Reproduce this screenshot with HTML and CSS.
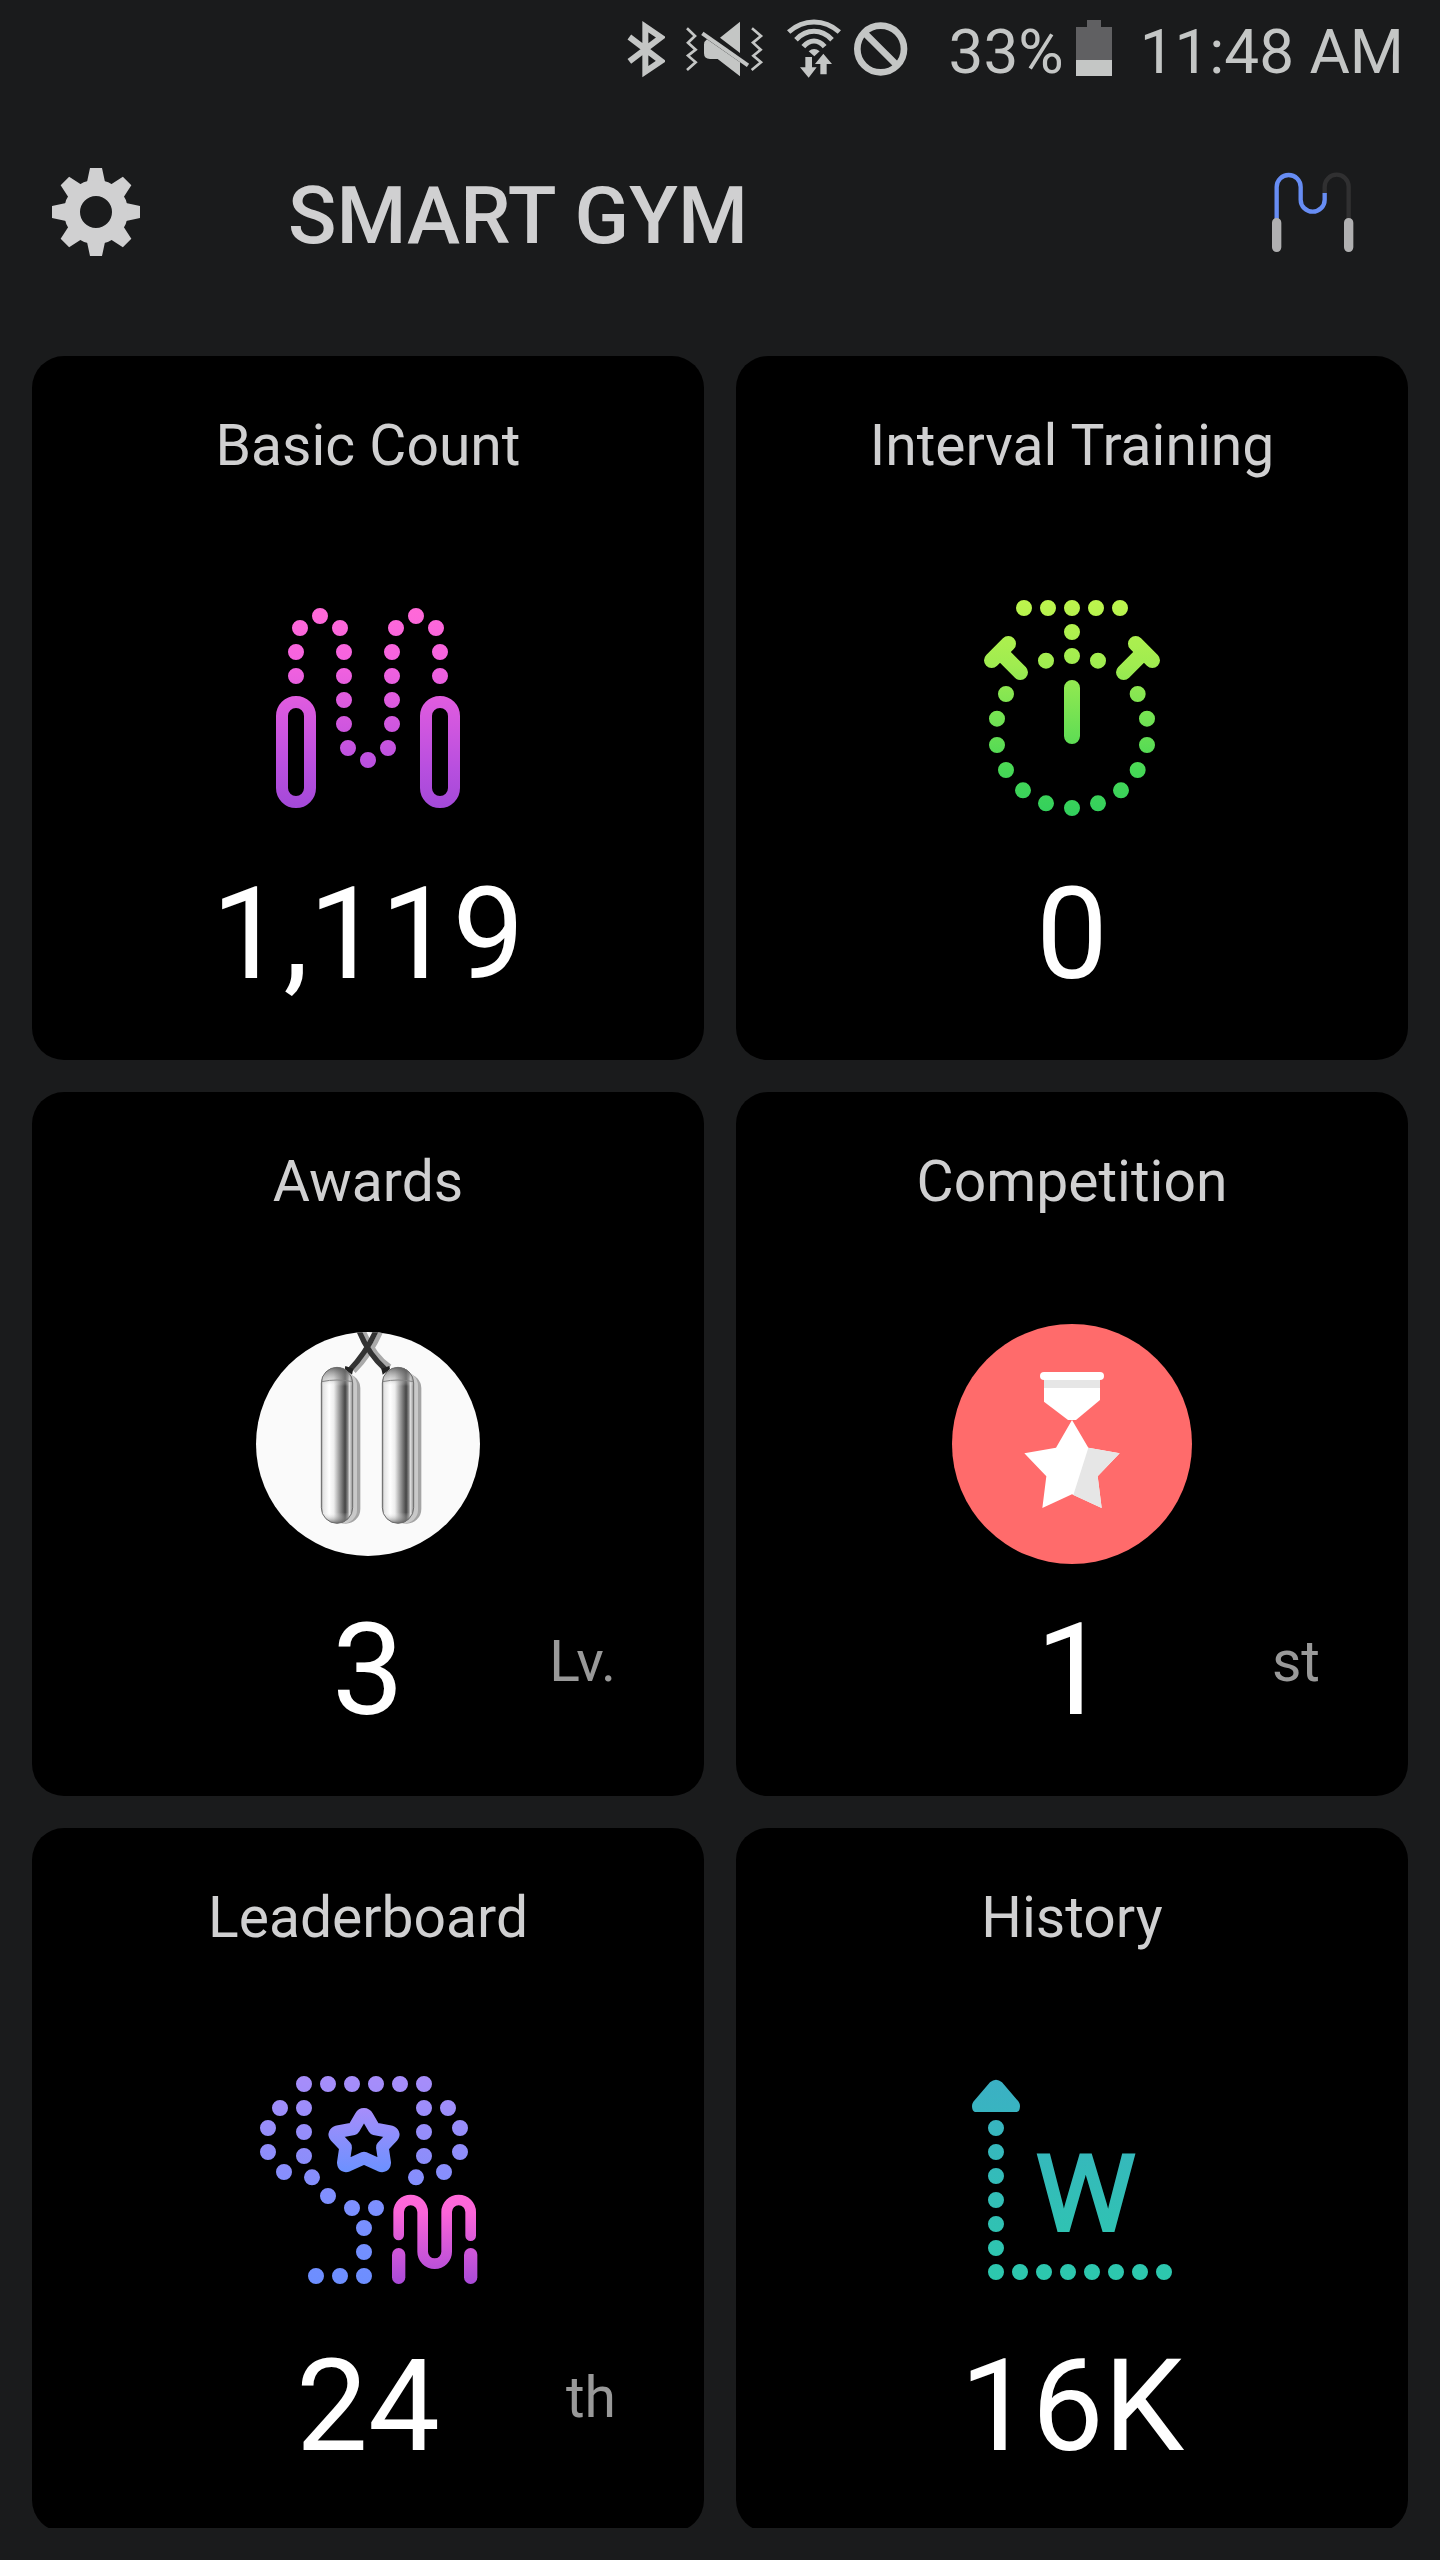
FILE: index.html
```html
<!DOCTYPE html>
<html lang="en">
<head>
<meta charset="utf-8">
<meta name="viewport" content="width=device-width, initial-scale=1">
<title>Smart Gym</title>
<link rel="stylesheet" href="styles.css">
</head>
<body>
<div class="status">
  <div class="status-icons">
    <svg width="38" height="60" viewBox="78 54 114 180" role="img" aria-label="Bluetooth"><path d="M85 111l95 72-47 32V80l47 32-95 72" fill="none" stroke="#c4c6c5" stroke-width="18"/></svg>
    <svg class="mute" width="79" height="60" viewBox="252 54 237 180" role="img" aria-label="Sound off"><g fill="#c4c6c5"><path d="M417 65v94l-60-46zM318 118q-9 6-9 16v26q0 17 18 17h23l67 52v-42l-99-69z"/><path d="M304 100l137 96" stroke="#c4c6c5" stroke-width="12"/></g><path d="M258 85l24 23-21 20 23 21-23 18 23 20-26 23M453 85l27 23-24 20 23 21-22 18 23 20-28 23" fill="none" stroke="#c4c6c5" stroke-width="8"/></svg>
    <svg width="57" height="60" viewBox="558 54 171 180" role="img" aria-label="Wi-Fi"><g fill="none" stroke="#c4c6c5" stroke-width="15"><path d="M566 96q34-30 76-30t76 30M588 119q24-25 54-25t54 25M610 140q14-17 32-17t32 17"/></g><path d="M626 154q16-14 33 0l-16 15zM616 171h20v31h14l-24 31-26-31h16zM661 223h19v-31h16l-26-31-25 31h16z" fill="#c4c6c5"/></svg>
    <svg width="56" height="60" viewBox="759 54 168 180" role="img" aria-label="Blocked"><g fill="none" stroke="#c4c6c5" stroke-width="20"><circle cx="842" cy="147" r="70"/><path d="M795 100l94 94"/></g></svg>
  </div>
  <div class="battery"><span class="status-text">33%</span><svg width="36" height="56" viewBox="0 0 36 56" aria-hidden="true"><path d="M0 7h11V0h14v7h11v33H0z" fill="#606062"/><path d="M0 40h36v16H0z" fill="#c4c6c5"/></svg></div>
  <time class="status-text">11:48 AM</time>
</div>

<header class="bar">
  <button class="icon-button" type="button" aria-label="Settings">
    <svg width="88" height="88" viewBox="-44 -44 88 88"><defs><path id="tooth" d="M-6-44H6L9-30 14-24H-14L-9-30z"/></defs><g fill="#d0d0d1"><use href="#tooth"/><use href="#tooth" transform="rotate(45)"/><use href="#tooth" transform="rotate(90)"/><use href="#tooth" transform="rotate(135)"/><use href="#tooth" transform="rotate(180)"/><use href="#tooth" transform="rotate(225)"/><use href="#tooth" transform="rotate(270)"/><use href="#tooth" transform="rotate(315)"/></g><circle r="24" fill="none" stroke="#d0d0d1" stroke-width="16"/></svg>
  </button>
  <h1>SMART GYM</h1>
  <button class="icon-button" type="button" aria-label="Connect rope">
    <svg width="88" height="88" viewBox="144 84 264 264" fill="none"><path d="M314 160V140a36 36 0 0 1 72 0v100" stroke="#303031" stroke-width="13"/><path d="M170 240V141a36 36 0 0 1 72 0v38a36 36 0 0 0 72 0V159" stroke="#678df4" stroke-width="13"/><path d="M170 248v74M386 248v74" stroke="#b0b0b1" stroke-width="28" stroke-linecap="round"/></svg>
  </button>
</header>

<main class="cards">
  <a class="card" href="#basic-count">
    <h2>Basic Count</h2>
    <svg class="art" viewBox="0 -30 768 792" fill="none" stroke="url(#pink)" stroke-linecap="round" aria-hidden="true">
      <defs><linearGradient id="pink" gradientUnits="userSpaceOnUse" x1="0" y1="84" x2="0" y2="684"><stop offset="0" stop-color="#ff69d8"/><stop offset=".25" stop-color="#f663df"/><stop offset=".8" stop-color="#b84fdf"/><stop offset="1" stop-color="#a349d8"/></linearGradient></defs>
      <path stroke-width="48" d="M168 288h0M168 216h0M180 144h0M240 108h0M300 144h0M312 216h0M312 288h0M312 360h0M312 432h0M324 504h0M384 540h0M444 504h0M456 432h0M456 360h0M456 288h0M456 216h0M468 144h0M528 108h0M588 144h0M600 216h0M600 288h0"/>
      <g stroke-width="36"><rect x="126" y="366" width="84" height="300" rx="42"/><rect x="558" y="366" width="84" height="300" rx="42"/></g>
    </svg>
    <p class="result"><span class="value">1,119</span></p>
  </a>

  <a class="card" href="#interval-training">
    <h2>Interval Training</h2>
    <svg class="art" viewBox="-18 0 768 792" fill="none" stroke="url(#lime)" stroke-linecap="round" aria-hidden="true">
      <defs><linearGradient id="lime" gradientUnits="userSpaceOnUse" x1="0" y1="90" x2="0" y2="738"><stop offset="0" stop-color="#bdf54d"/><stop offset=".3" stop-color="#a0ec50"/><stop offset=".8" stop-color="#45d756"/><stop offset="1" stop-color="#32cf5d"/></linearGradient></defs>
      <path stroke-width="48" d="M222 114h0M294 114h0M366 114h0M438 114h0M510 114h0M366 186h0M366 258h0M288 272h0M444 272h0M168 372h0M141 446h0M141 525h0M168 600h0M219 661h0M288 700h0M366 714h0M444 700h0M513 661h0M563 600h0M591 525h0M591 446h0M563 372h0M366 354v144"/>
      <path stroke-width="46" d="M125 271l50-50M158 254l53 53M607 271l-50-50M574 254l-53 53"/>
    </svg>
    <p class="result"><span class="value">0</span></p>
  </a>

  <a class="card" href="#awards">
    <h2>Awards</h2>
    <svg class="art" viewBox="0 -12 768 792" aria-hidden="true">
      <defs>
        <clipPath id="badge"><circle cx="384" cy="402" r="336"/></clipPath>
        <linearGradient id="steel"><stop offset="0" stop-color="#777"/><stop offset=".05" stop-color="#e2e2e2"/><stop offset=".25" stop-color="#fff"/><stop offset=".4" stop-color="#eee"/><stop offset=".58" stop-color="#999"/><stop offset=".76" stop-color="#454545"/><stop offset=".84" stop-color="#858585"/><stop offset=".9" stop-color="#ddd"/><stop offset="1" stop-color="#8c8c8c"/></linearGradient>
        <linearGradient id="dome" x1="0" y1="0" x2="0" y2="1"><stop offset="0" stop-color="#555" stop-opacity=".85"/><stop offset=".09" stop-color="#bbb" stop-opacity=".35"/><stop offset=".12" stop-color="#fff" stop-opacity="0"/><stop offset=".93" stop-color="#fff" stop-opacity="0"/><stop offset="1" stop-color="#555" stop-opacity=".8"/></linearGradient>
        <g id="handle"><rect x="30" y="20" width="88" height="450" rx="44" fill="#a5a5a5"/><rect x="24" y="14" width="84" height="456" rx="42" fill="#c9c9c9"/><rect x="1" y="1" width="94" height="468" rx="47" fill="url(#steel)"/><rect x="1" y="1" width="94" height="468" rx="47" fill="url(#dome)" stroke="#6c6c6c" stroke-width="3"/><path d="M2 44q46-10 92 0" fill="none" stroke="#858585" stroke-width="3"/></g>
      </defs>
      <circle cx="384" cy="402" r="336" fill="#fafafa"/>
      <g clip-path="url(#badge)">
        <path d="M424 62q-32 72-82 122M370 62q32 76 80 108" fill="none" stroke="#aaa" stroke-width="14"/>
        <path d="M409 60q-30 68-80 120M356 60q28 72 82 120" fill="none" stroke="#333" stroke-width="16"/>
        <path d="M316 168l24 8-4 18-22-16zM448 168l-24 8 4 18 22-16z" fill="#222"/>
        <use href="#handle" x="243" y="171"/><use href="#handle" x="426" y="171"/>
      </g>
    </svg>
    <p class="result"><span class="value">3</span><span class="unit">Lv.</span></p>
  </a>

  <a class="card" href="#competition">
    <h2>Competition</h2>
    <svg class="art" viewBox="42 18 768 792" aria-hidden="true">
      <circle cx="426" cy="432" r="360" fill="#ff6b6b"/>
      <path d="M342 236h168v64l-72 60h-24l-72-55z" fill="#fff"/><path d="M342 238h168v26H342z" fill="#e6e6e6"/><rect x="330" y="216" width="192" height="24" rx="12" fill="#fff"/>
      <path d="M426 360l49 83 94 17-66 69 12 95-89-41-89 41 12-95-66-69 95-17z" fill="#fff"/><path d="M475 443l94 17-66 69 12 95-85-39z" fill="#e6e6e6"/>
    </svg>
    <p class="result"><span class="value">1</span><span class="unit">st</span></p>
  </a>

  <a class="card" href="#leaderboard">
    <h2>Leaderboard</h2>
    <svg class="art" viewBox="0 -24 768 792" fill="none" stroke-linecap="round" stroke-linejoin="round" aria-hidden="true">
      <defs>
        <linearGradient id="violet" gradientUnits="userSpaceOnUse" x1="0" y1="78" x2="0" y2="702"><stop offset="0" stop-color="#a78dfa"/><stop offset=".35" stop-color="#908dfa"/><stop offset=".65" stop-color="#7b90ff"/><stop offset="1" stop-color="#6c8eff"/></linearGradient>
        <linearGradient id="star" gradientUnits="userSpaceOnUse" x1="0" y1="174" x2="0" y2="366"><stop offset="0" stop-color="#a78dfa"/><stop offset="1" stop-color="#6c91ff"/></linearGradient>
        <linearGradient id="rope" gradientUnits="userSpaceOnUse" x1="0" y1="434" x2="0" y2="702"><stop offset="0" stop-color="#ff69d8"/><stop offset=".2" stop-color="#fb65d9"/><stop offset="1" stop-color="#a94ad8"/></linearGradient>
      </defs>
      <path stroke="url(#violet)" stroke-width="48" d="M192 102h0M264 102h0M336 102h0M408 102h0M480 102h0M552 102h0M192 174h0M192 246h0M192 318h0M216 382h0M264 438h0M336 474h0M408 474h0M372 534h0M372 606h0M372 678h0M300 678h0M228 678h0M120 174h0M84 234h0M84 306h0M132 366h0M552 174h0M552 246h0M552 318h0M528 382h0M624 174h0M660 234h0M660 306h0M612 366h0"/>
      <path stroke="url(#star)" stroke-width="38" d="M372 193q6 0 10 7l21 36 48 9q13 5 6 14l-30 32 7 47q-1 13-14 8l-48-22-48 22q-13 5-14-8l7-47-30-32q-7-9 6-14l48-9 21-36q4-7 10-7z"/>
      <g stroke="url(#rope)"><path stroke-width="32" d="M476 555v-69a36 36 0 0 1 72 0v119a36 36 0 0 0 72 0V486a36 36 0 0 1 72 0v71"/><path stroke-width="40" d="M476 614v68"/><path stroke-width="40" d="M692 614v68"/></g>
    </svg>
    <p class="result"><span class="value">24</span><span class="unit">th</span></p>
  </a>

  <a class="card" href="#history">
    <h2>History</h2>
    <svg class="art" viewBox="12 -24 768 792" aria-hidden="true">
      <defs><linearGradient id="teal" gradientUnits="userSpaceOnUse" x1="0" y1="90" x2="0" y2="690"><stop offset="0" stop-color="#3bb0c4"/><stop offset="1" stop-color="#2cc8ad"/></linearGradient></defs>
      <path fill="url(#teal)" d="M150 97q18-15 36 0l50 58q6 9 3 21-2 10-12 10H109q-10 0-12-10-3-12 3-21z"/>
      <path fill="none" stroke="url(#teal)" stroke-width="48" stroke-linecap="round" d="M168 234h0M168 306h0M168 378h0M168 450h0M168 522h0M168 594h0M168 666h0M240 666h0M312 666h0M384 666h0M456 666h0M528 666h0M600 666h0M672 666h0"/>
      <text class="mark" x="438" y="540" fill="url(#teal)" stroke="url(#teal)" stroke-width="12">W</text>
    </svg>
    <p class="result"><span class="value">16K</span></p>
  </a>
</main>
</body>
</html>
```

FILE: styles.css
```css
* {
  box-sizing: border-box;
}

body {
  display: flex;
  flex-direction: column;
  height: 100vh;
  margin: 0;
  padding-bottom: 32px;
  background: #1a1b1c;
  color: #d0d0d1;
  font-family: Roboto, "Liberation Sans", sans-serif;
}

h1,
h2,
p {
  margin: 0;
}

svg {
  display: block;
  flex: none;
}

.status {
  display: flex;
  flex: none;
  justify-content: flex-end;
  align-items: center;
  gap: 28px;
  padding: 6px 36px 10px;
}

.status-icons {
  display: flex;
  gap: 10px;
  margin-right: 12px;
}

.status-text {
  padding-top: 8px;
  color: #c4c6c5;
  font-size: 62px;
  line-height: 76px;
}

.mute {
  margin: 0 12px 0 10px;
}

.battery {
  display: flex;
  align-items: center;
  gap: 12px;
}

.bar {
  display: flex;
  flex: none;
  align-items: flex-start;
  padding: 68px 84px 92px 52px;
}

.bar h1 {
  flex: 1;
  margin-left: 148px;
  font-size: 80px;
  font-weight: 500;
  line-height: 96px;
}

.icon-button {
  padding: 0;
  border: 0;
  background: none;
  cursor: pointer;
}

/* The cards scroll under the header; the last row may be cut by the edge. */
.cards {
  display: grid;
  flex: 1;
  grid-template-columns: 1fr 1fr;
  align-content: start;
  gap: 32px;
  min-height: 0;
  padding: 0 32px;
  overflow: hidden auto;
  scrollbar-width: none;
}

.card {
  display: flex;
  flex-direction: column;
  align-items: center;
  padding: 58px 88px 62px;
  border-radius: 32px;
  background: #000;
  color: inherit;
  text-decoration: none;
}

.card h2 {
  font-size: 57px;
  font-weight: 400;
  line-height: 64px;
  white-space: nowrap;
}

.art {
  width: 256px;
  height: 264px;
  margin: 92px 0 36px;
}

.mark {
  font-family: "Open Sans", sans-serif;
  font-size: 314px;
  font-weight: 400;
  text-anchor: middle;
}

.result {
  display: grid;
  grid-template-columns: 1fr auto 1fr;
  align-items: center;
  width: 100%;
}

.value {
  grid-column: 2;
  color: #fff;
  font-size: 128px;
  line-height: 128px;
}

.unit {
  justify-self: end;
  margin-bottom: 16px;
  color: #999;
  font-size: 57px;
  line-height: 64px;
}
```
